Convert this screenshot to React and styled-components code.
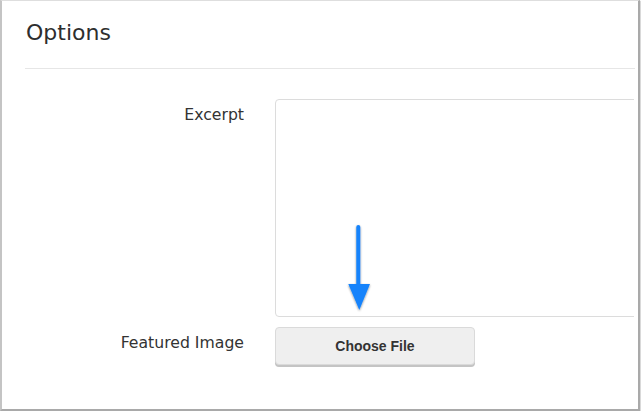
import styled, { createGlobalStyle } from "styled-components";

const GlobalStyle = createGlobalStyle`
  html, body {
    margin: 0;
    padding: 0;
    background: #ffffff;
  }
`;

const App = () => (
  <>
    <GlobalStyle />
    <Card>
      <Header>
        <Title>Options</Title>
      </Header>
      <Form>
        <Row>
          <Label>Excerpt</Label>
          <TextArea />
        </Row>
        <Row>
          <Label>Featured Image</Label>
          <FileButton type="button">Choose File</FileButton>
        </Row>
      </Form>
      <Arrow width="40" height="100" viewBox="0 0 40 100">
        <defs>
          <filter id="arrowShadow" x="-50%" y="-20%" width="200%" height="140%">
            <feDropShadow dx="0" dy="1" stdDeviation="1.2" floodColor="#000" floodOpacity="0.45" />
          </filter>
        </defs>
        <g filter="url(#arrowShadow)" fill="#1683fb">
          <rect x="16.3" y="7" width="4" height="62" rx="2" />
          <polygon points="8.3,66 30,66 19.3,92" />
        </g>
      </Arrow>
    </Card>
  </>
);

const Card = styled.div`
  position: relative;
  box-sizing: border-box;
  width: 640px;
  height: 411px;
  background: #fff;
  border-top: 1px solid #dedede;
  border-left: 2px solid #c4c4c4;
  border-right: 2px solid #a9a9a9;
  border-bottom: 2px solid #a9a9a9;
  box-shadow: 1px 1px 1px rgba(0, 0, 0, 0.15);
  overflow: hidden;
  font-family: "DejaVu Sans", sans-serif;
`;

const Header = styled.div`
  margin-left: 23px;
  width: 609px;
  padding: 17px 0 20px 1px;
  border-bottom: 1px solid #e6e6e6;
`;

const Title = styled.h2`
  margin: 0;
  font-size: 22px;
  line-height: 30px;
  font-weight: normal;
  color: #2e2e2e;
`;

const Form = styled.div`
  margin-left: 23px;
  width: 609px;
  padding: 30px 0 6px;
  overflow: hidden;
  display: flex;
  flex-direction: column;
  gap: 10px;
`;

const Row = styled.div`
  display: grid;
  grid-template-columns: 219px 1fr;
  column-gap: 31px;
  align-items: start;
`;

const Label = styled.label`
  text-align: right;
  font-size: 15.7px;
  line-height: 20px;
  padding-top: 6px;
  color: #333;
`;

const TextArea = styled.textarea`
  box-sizing: border-box;
  width: calc(100% + 30px);
  height: 218px;
  margin: 0;
  border: 1px solid #dcdcdc;
  border-radius: 4px;
  resize: none;
  background: #fff;
`;

const FileButton = styled.button`
  box-sizing: border-box;
  width: 200px;
  height: 38px;
  margin: 0;
  border: 1px solid #dadada;
  border-radius: 4px;
  background: #efefef;
  box-shadow: 0 2px 0 #c4c4c4;
  font-family: "Liberation Sans", Arial, sans-serif;
  font-weight: bold;
  font-size: 14px;
  color: #333;
`;

const Arrow = styled.svg`
  position: absolute;
  left: 338px;
  top: 217px;
  overflow: visible;
`;

export default App;
